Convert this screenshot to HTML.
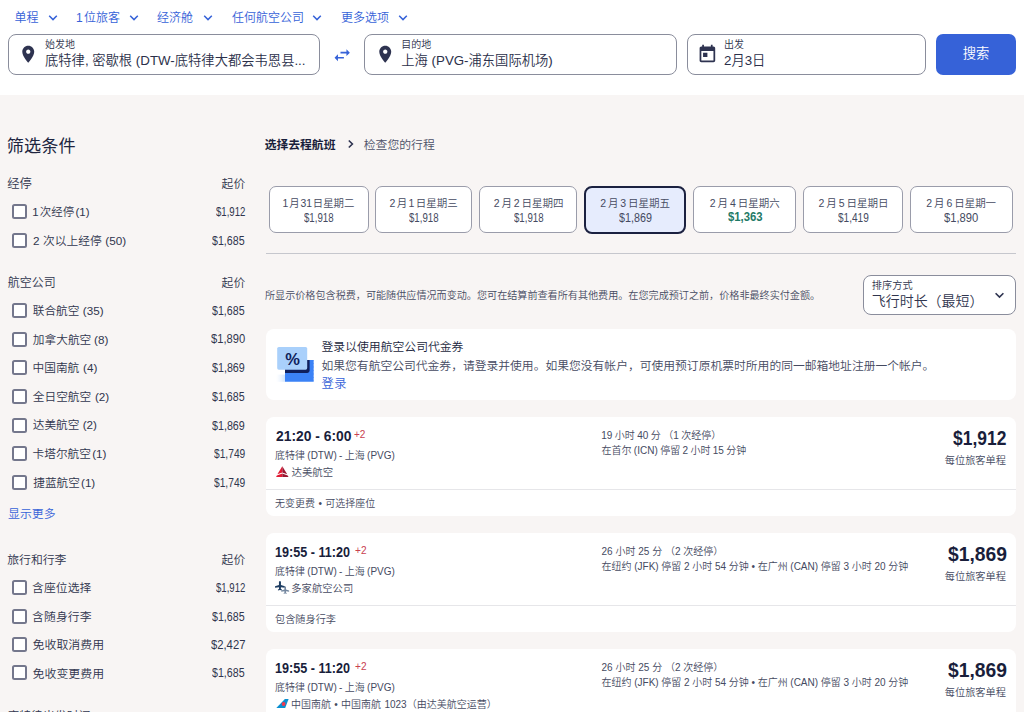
<!DOCTYPE html>
<html lang="zh-CN">
<head>
<meta charset="utf-8">
<title>航班搜索结果</title>
<style>
*{box-sizing:border-box;margin:0;padding:0}
html,body{width:1024px;height:712px;overflow:hidden}
body{position:relative;background:#f8f5f4;color:#191e3b;font-family:"Liberation Sans","Noto Sans CJK SC",sans-serif;font-size:12px;line-height:1;font-weight:350}
.abs{position:absolute;white-space:nowrap}
.x{position:absolute;white-space:nowrap;line-height:1;font-weight:350}
.hdr{position:absolute;left:0;top:0;width:1024px;height:95px;background:#fff}
.opt{position:absolute;top:10.7px;word-spacing:-2px;font-size:12px;color:#3662d8;white-space:nowrap;height:14px;line-height:14px}
.field{position:absolute;top:34px;height:41px;border:1px solid #8a8d9c;border-radius:8px;background:#fff}
.field .lab{position:absolute;left:36px;top:4.8px;font-size:10px;color:#2b304a;white-space:nowrap}
.field .val{position:absolute;left:36px;top:19.2px;font-size:13.3px;color:#2b304a;white-space:nowrap}
.btn{position:absolute;left:935.9px;top:34.3px;width:80.4px;height:40.3px;border-radius:7px;background:#3662d8;color:#fff;font-size:13.3px;text-align:center;line-height:40px}
.cbx{position:absolute;left:11.9px;width:15px;height:15px;border:2px solid #74778c;border-radius:2.5px;background:#fff}
.tab{position:absolute;top:186px;height:47px;border:1px solid #9a9caa;border-radius:7px;background:#fff}
.tab.sel{top:186px;height:47.5px;border:2px solid #1b2140;background:#e6ecfd;border-radius:8px}
.card{position:absolute;left:265.5px;width:750.7px;background:#fff;border-radius:8px}
.ln{position:absolute;left:265.5px;width:750.7px;height:1px;background:#e6e6e9}
</style>
</head>
<body>
<div class="hdr"></div>

<div class="opt" style="left:14.5px">单程</div><svg class="abs" style="left:48px;top:13.5px" width="10" height="8" viewBox="0 0 10 8"><path d="M1.2 1.8 L5 5.6 L8.8 1.8" fill="none" stroke="#3662d8" stroke-width="1.5"/></svg>
<div class="opt" style="left:76px">1 位旅客</div><svg class="abs" style="left:128.5px;top:13.5px" width="10" height="8" viewBox="0 0 10 8"><path d="M1.2 1.8 L5 5.6 L8.8 1.8" fill="none" stroke="#3662d8" stroke-width="1.5"/></svg>
<div class="opt" style="left:157px">经济舱</div><svg class="abs" style="left:202.5px;top:13.5px" width="10" height="8" viewBox="0 0 10 8"><path d="M1.2 1.8 L5 5.6 L8.8 1.8" fill="none" stroke="#3662d8" stroke-width="1.5"/></svg>
<div class="opt" style="left:232px">任何航空公司</div><svg class="abs" style="left:312px;top:13.5px" width="10" height="8" viewBox="0 0 10 8"><path d="M1.2 1.8 L5 5.6 L8.8 1.8" fill="none" stroke="#3662d8" stroke-width="1.5"/></svg>
<div class="opt" style="left:341px">更多选项</div><svg class="abs" style="left:397.5px;top:13.5px" width="10" height="8" viewBox="0 0 10 8"><path d="M1.2 1.8 L5 5.6 L8.8 1.8" fill="none" stroke="#3662d8" stroke-width="1.5"/></svg>
<div class="field" style="left:8px;width:312px"><div class="lab">始发地</div><div class="val">底特律, 密歇根 (DTW-底特律大都会韦恩县...</div></div>
<svg class="abs" style="left:17.7px;top:44.3px" width="20.5" height="20.5" viewBox="0 0 24 24"><path fill="#2e3350" d="M12 2C8.13 2 5 5.13 5 9c0 5.25 7 13 7 13s7-7.75 7-13c0-3.87-3.13-7-7-7zm0 9.5c-1.38 0-2.5-1.12-2.5-2.5s1.12-2.5 2.5-2.5 2.5 1.12 2.5 2.5-1.12 2.5-2.5 2.5z"/></svg>
<svg class="abs" style="left:331.9px;top:44.5px" width="20.4" height="20.4" viewBox="0 0 24 24"><path fill="#3662d8" d="M6.99 11L3 15l3.99 4v-3H14v-2H6.99v-3zM21 9l-3.99-4v3H10v2h7.01v3L21 9z"/></svg>
<div class="field" style="left:364.3px;width:312.7px"><div class="lab">目的地</div><div class="val">上海 (PVG-浦东国际机场)</div></div>
<svg class="abs" style="left:374.6px;top:44.3px" width="20.5" height="20.5" viewBox="0 0 24 24"><path fill="#2e3350" d="M12 2C8.13 2 5 5.13 5 9c0 5.25 7 13 7 13s7-7.75 7-13c0-3.87-3.13-7-7-7zm0 9.5c-1.38 0-2.5-1.12-2.5-2.5s1.12-2.5 2.5-2.5 2.5 1.12 2.5 2.5-1.12 2.5-2.5 2.5z"/></svg>
<div class="field" style="left:687px;width:239.3px"><div class="lab">出发</div><div class="val">2月3日</div></div>
<svg class="abs" style="left:697.1px;top:44.2px" width="20.8" height="20.8" viewBox="0 0 24 24"><path fill="#2e3350" d="M19 3h-1V1h-2v2H8V1H6v2H5c-1.11 0-1.99.9-1.99 2L3 19c0 1.1.89 2 2 2h14c1.1 0 2-.9 2-2V5c0-1.1-.9-2-2-2zm0 16H5V8h14v11zM7 10h5v5H7z"/></svg>
<div class="btn">搜索</div>

<div class="cbx" style="top:204.1px"></div>
<div class="cbx" style="top:232.6px"></div>
<div class="cbx" style="top:303.0px"></div>
<div class="cbx" style="top:331.7px"></div>
<div class="cbx" style="top:360.3px"></div>
<div class="cbx" style="top:388.8px"></div>
<div class="cbx" style="top:417.5px"></div>
<div class="cbx" style="top:446.0px"></div>
<div class="cbx" style="top:474.6px"></div>
<div class="cbx" style="top:580.2px"></div>
<div class="cbx" style="top:608.6px"></div>
<div class="cbx" style="top:637.1px"></div>
<div class="cbx" style="top:665.4px"></div>
<svg class="abs" style="left:346.5px;top:138.5px" width="8" height="10" viewBox="0 0 8 10"><path d="M1.8 1.5 L5.4 5 L1.8 8.5" fill="none" stroke="#2e3350" stroke-width="1.6"/></svg>
<div class="tab" style="left:269.0px;width:100.00px"></div>
<div class="tab" style="left:375.25px;width:96.75px"></div>
<div class="tab" style="left:479.0px;width:98.00px"></div>
<div class="tab sel" style="left:583.75px;width:102.50px"></div>
<div class="tab" style="left:692.8px;width:103.40px"></div>
<div class="tab" style="left:802.9px;width:99.80px"></div>
<div class="tab" style="left:909.8px;width:103.10px"></div>
<div class="abs" style="left:265.5px;top:253px;width:750.7px;height:1px;background:#c6c7cd"></div>
<div class="abs" style="left:863px;top:274.5px;width:153.3px;height:40px;border:1px solid #8a8d9c;border-radius:8px;background:#fff"></div>
<svg class="abs" style="left:993.5px;top:290.5px" width="11" height="9" viewBox="0 0 11 9"><path d="M1.6 2.2 L5.5 6.1 L9.4 2.2" fill="none" stroke="#2e3350" stroke-width="1.6"/></svg>
<div class="card" style="top:328.7px;height:71.3px"></div>
<svg class="abs" style="left:274px;top:344px" width="44" height="42" viewBox="274 344 44 42">
<defs><linearGradient id="fade" x1="0" y1="0" x2="1" y2="0"><stop offset="0" stop-color="#d7e8fd" stop-opacity="0"/><stop offset="1" stop-color="#a9cdf9" stop-opacity="0.55"/></linearGradient></defs>
<rect x="276" y="374.6" width="9.2" height="7.2" fill="url(#fade)"/>
<path d="M285 360.1 H313.4 L314 360.7 L313.4 361.4 L314 362.1 L313.4 362.8 L314 363.5 L313.4 364.2 L314 364.9 L313.4 365.6 L314 366.3 L313.4 367 L314 367.7 L313.4 368.4 L314 369.1 L313.4 369.8 L314 370.5 L313.4 371.2 L314 371.9 L313.4 372.6 L314 373.3 L313.4 374 L314 374.7 L313.4 375.4 L314 376.1 L313.4 376.8 L314 377.5 L313.4 378.2 L314 378.9 L313.4 379.6 L314 380.3 L313.4 381 L314 381.8 H285 Z" fill="#3b82f6"/>
<path d="M285 360.1 H309.6 V370.6 Q309.6 372.9 307.3 372.9 H285 Z" fill="#0f1f5c"/>
<rect x="277.2" y="347" width="30" height="22.7" rx="1.6" fill="#a9d0fb"/>
<text x="292.7" y="364.6" text-anchor="middle" font-family="Liberation Sans, sans-serif" font-weight="bold" font-size="16.5" fill="#0f1f5c">%</text>
</svg>
<div class="card" style="top:417.3px;height:98.7px"></div>
<div class="ln" style="top:489px"></div>
<div class="card" style="top:533.3px;height:98.7px"></div>
<div class="ln" style="top:605px"></div>
<div class="card" style="top:649.3px;height:98.7px"></div>
<div class="ln" style="top:721px"></div>
<svg class="abs" style="left:275px;top:465px" width="15" height="13" viewBox="275 465 15 13">
<path d="M282.3 466.2 L277.4 474.3 L282.3 472.5 Z" fill="#e01933"/><path d="M282.3 466.2 L287.2 474.3 L282.3 472.5 Z" fill="#9b1631"/>
<path d="M276.1 476.9 L276.9 475.5 L282.3 473.6 L282.3 476.9 Z" fill="#e01933"/><path d="M288.5 476.9 L287.7 475.5 L282.3 473.6 L282.3 476.9 Z" fill="#9b1631"/>
</svg>
<svg class="abs" style="left:274px;top:580px" width="17" height="16" viewBox="274 580 17 16">
<path transform="translate(279.95,581.0) scale(1.0)" fill="#1f3e63" d="M-1 0.7 Q0 -0.5 1 0.7 L1 4 L4.9 5.3 L4.9 6.7 L1 6.2 L0.9 7.9 L2 8.6 L2 9.4 L0 9 L-2 9.4 L-2 8.6 L-0.9 7.9 L-1 6.2 L-4.9 6.7 L-4.9 5.3 L-1 4 Z"/>
<path transform="translate(285.2,586.3) scale(0.8)" fill="#73869f" d="M-1 0.7 Q0 -0.5 1 0.7 L1 4 L4.9 5.3 L4.9 6.7 L1 6.2 L0.9 7.9 L2 8.6 L2 9.4 L0 9 L-2 9.4 L-2 8.6 L-0.9 7.9 L-1 6.2 L-4.9 6.7 L-4.9 5.3 L-1 4 Z"/>
</svg>
<svg class="abs" style="left:275px;top:697px" width="15" height="13" viewBox="275 697 15 13">
<path d="M284.9 698.9 H288.6 L285.2 708.1 H276.3 Z" fill="#0a8fd0"/>
<circle cx="283.6" cy="704" r="1.9" fill="#f0384e"/>
</svg>
<div class="x" id="h2" style="left:6.75px;top:138.22px;font-size:17.13px;color:#20253f;font-weight:400;letter-spacing:0.101px">筛选条件</div>
<div class="x" id="at" style="left:7.25px;top:178.19px;font-size:12.29px;color:#30354e">经停</div>
<div class="x" id="ap" style="left:221.55px;top:178.26px;font-size:11.74px;color:#30354e;letter-spacing:0.150px">起价</div>
<div class="x" id="al0" style="left:32.25px;top:206.75px;font-size:11.45px;color:#30354e;letter-spacing:0.030px;word-spacing:-2.00px">1 次经停 (1)</div>
<div class="x" id="av0" style="left:215.55px;top:206.15px;font-size:12.30px;color:#30354e;transform:scaleX(0.782);transform-origin:0 50%">$1,912</div>
<div class="x" id="al1" style="left:33.00px;top:234.55px;font-size:11.72px;color:#30354e;letter-spacing:0.013px;word-spacing:0.30px">2 次以上经停 (50)</div>
<div class="x" id="av1" style="left:212.15px;top:234.65px;font-size:12.30px;color:#30354e;transform:scaleX(0.866);transform-origin:0 50%">$1,685</div>
<div class="x" id="bt" style="left:7.70px;top:277.09px;font-size:11.99px;color:#30354e;letter-spacing:0.049px">航空公司</div>
<div class="x" id="bp" style="left:221.55px;top:277.16px;font-size:11.74px;color:#30354e;letter-spacing:0.150px">起价</div>
<div class="x" id="bl0" style="left:32.75px;top:304.95px;font-size:11.67px;color:#30354e;letter-spacing:0.019px;word-spacing:0.10px">联合航空 (35)</div>
<div class="x" id="bv0" style="left:212.15px;top:305.05px;font-size:12.30px;color:#30354e;transform:scaleX(0.866);transform-origin:0 50%">$1,685</div>
<div class="x" id="bl1" style="left:32.75px;top:333.65px;font-size:11.70px;color:#30354e;letter-spacing:0.031px;word-spacing:-0.50px">加拿大航空 (8)</div>
<div class="x" id="bv1" style="left:211.00px;top:333.05px;font-size:12.30px;color:#30354e;transform:scaleX(0.908);transform-origin:0 50%">$1,890</div>
<div class="x" id="bl2" style="left:32.50px;top:362.25px;font-size:11.71px;color:#30354e;letter-spacing:-0.007px;word-spacing:0.55px">中国南航 (4)</div>
<div class="x" id="bv2" style="left:212.40px;top:362.35px;font-size:12.30px;color:#30354e;transform:scaleX(0.872);transform-origin:0 50%">$1,869</div>
<div class="x" id="bl3" style="left:32.75px;top:390.75px;font-size:11.69px;color:#30354e;letter-spacing:0.012px;word-spacing:0.40px">全日空航空 (2)</div>
<div class="x" id="bv3" style="left:212.15px;top:390.85px;font-size:12.30px;color:#30354e;transform:scaleX(0.866);transform-origin:0 50%">$1,685</div>
<div class="x" id="bl4" style="left:32.75px;top:419.45px;font-size:11.66px;color:#30354e;letter-spacing:-0.007px;word-spacing:0.05px">达美航空 (2)</div>
<div class="x" id="bv4" style="left:212.40px;top:419.55px;font-size:12.30px;color:#30354e;transform:scaleX(0.872);transform-origin:0 50%">$1,869</div>
<div class="x" id="bl5" style="left:32.50px;top:447.95px;font-size:11.71px;color:#30354e;letter-spacing:-0.012px;word-spacing:-2.00px">卡塔尔航空 (1)</div>
<div class="x" id="bv5" style="left:213.60px;top:448.05px;font-size:12.30px;color:#30354e;transform:scaleX(0.831);transform-origin:0 50%">$1,749</div>
<div class="x" id="bl6" style="left:33.25px;top:476.55px;font-size:11.64px;color:#30354e;letter-spacing:0.007px;word-spacing:-2.00px">捷蓝航空 (1)</div>
<div class="x" id="bv6" style="left:213.60px;top:476.65px;font-size:12.30px;color:#30354e;transform:scaleX(0.831);transform-origin:0 50%">$1,749</div>
<div class="x" id="more" style="left:8.00px;top:508.73px;font-size:11.90px;color:#3662d8">显示更多</div>
<div class="x" id="ct" style="left:7.25px;top:555.19px;font-size:11.89px;color:#30354e;letter-spacing:-0.054px">旅行和行李</div>
<div class="x" id="cp" style="left:221.55px;top:554.46px;font-size:11.74px;color:#30354e;letter-spacing:0.150px">起价</div>
<div class="x" id="cl0" style="left:32.08px;top:583.45px;font-size:11.83px;color:#30354e;letter-spacing:0.027px">含座位选择</div>
<div class="x" id="cv0" style="left:215.55px;top:582.25px;font-size:12.30px;color:#30354e;transform:scaleX(0.782);transform-origin:0 50%">$1,912</div>
<div class="x" id="cl1" style="left:32.08px;top:611.95px;font-size:11.83px;color:#30354e;letter-spacing:0.090px">含随身行李</div>
<div class="x" id="cv1" style="left:212.15px;top:610.65px;font-size:12.30px;color:#30354e;transform:scaleX(0.866);transform-origin:0 50%">$1,685</div>
<div class="x" id="cl2" style="left:32.50px;top:640.25px;font-size:11.93px;color:#30354e;letter-spacing:0.030px">免收取消费用</div>
<div class="x" id="cv2" style="left:211.00px;top:639.15px;font-size:12.30px;color:#30354e;transform:scaleX(0.914);transform-origin:0 50%">$2,427</div>
<div class="x" id="cl3" style="left:32.50px;top:668.85px;font-size:11.93px;color:#30354e;letter-spacing:0.030px">免收变更费用</div>
<div class="x" id="cv3" style="left:212.15px;top:667.45px;font-size:12.30px;color:#30354e;transform:scaleX(0.866);transform-origin:0 50%">$1,685</div>
<div class="x" id="dt" style="left:7.25px;top:710.80px;font-size:11.89px;color:#30354e;letter-spacing:0.030px">底特律出发时间</div>
<div class="x" id="bc1" style="left:264.75px;top:139.92px;font-size:11.83px;color:#191e3b;font-weight:bold;letter-spacing:-0.050px">选择去程航班</div>
<div class="x" id="bc2" style="left:363.75px;top:139.92px;font-size:11.83px;color:#4b5067">检查您的行程</div>
<div class="x" id="td0" style="left:282.50px;top:199.15px;font-size:10.39px;color:#454a61;word-spacing:-2.00px">1 月 31 日星期二</div>
<div class="x" id="tp0" style="left:303.75px;top:212.25px;font-size:12.50px;color:#454a61;transform:scaleX(0.773);transform-origin:0 50%">$1,918</div>
<div class="x" id="td1" style="left:389.50px;top:198.05px;font-size:10.50px;color:#454a61;word-spacing:-1.58px">2 月 1 日星期三</div>
<div class="x" id="tp1" style="left:408.75px;top:212.25px;font-size:12.50px;color:#454a61;transform:scaleX(0.773);transform-origin:0 50%">$1,918</div>
<div class="x" id="td2" style="left:493.75px;top:198.05px;font-size:10.50px;color:#454a61;word-spacing:-1.08px">2 月 2 日星期四</div>
<div class="x" id="tp2" style="left:513.75px;top:212.25px;font-size:12.50px;color:#454a61;transform:scaleX(0.773);transform-origin:0 50%">$1,918</div>
<div class="x" id="td3" style="left:600.25px;top:198.05px;font-size:10.50px;color:#454a61;word-spacing:-1.08px">2 月 3 日星期五</div>
<div class="x" id="tp3" style="left:619.00px;top:212.25px;font-size:12.50px;color:#454a61;transform:scaleX(0.860);transform-origin:0 50%">$1,869</div>
<div class="x" id="td4" style="left:709.65px;top:199.15px;font-size:10.49px;color:#454a61;letter-spacing:0.006px;word-spacing:-0.93px">2 月 4 日星期六</div>
<div class="x" id="tp4" style="left:727.66px;top:211.25px;font-size:12.50px;color:#1f7a66;transform:scaleX(0.905);transform-origin:0 50%;font-weight:bold">$1,363</div>
<div class="x" id="td5" style="left:818.45px;top:198.05px;font-size:10.53px;color:#454a61;letter-spacing:-0.010px;word-spacing:-0.95px">2 月 5 日星期日</div>
<div class="x" id="tp5" style="left:837.94px;top:212.25px;font-size:12.50px;color:#454a61;transform:scaleX(0.805);transform-origin:0 50%">$1,419</div>
<div class="x" id="td6" style="left:926.30px;top:199.15px;font-size:10.48px;color:#454a61;letter-spacing:0.012px;word-spacing:-1.01px">2 月 6 日星期一</div>
<div class="x" id="tp6" style="left:944.40px;top:212.25px;font-size:12.50px;color:#454a61;transform:scaleX(0.897);transform-origin:0 50%">$1,890</div>
<div class="x" id="disc" style="left:265.00px;top:290.75px;font-size:10.10px;color:#454a61">所显示价格包含税费，可能随供应情况而变动。您可在结算前查看所有其他费用。在您完成预订之前，价格非最终实付金额。</div>
<div class="x" id="sl" style="left:871.75px;top:280.88px;font-size:10.19px;color:#30354e;letter-spacing:0.083px">排序方式</div>
<div class="x" id="sv" style="left:871.75px;top:295.15px;font-size:13.97px;color:#30354e">飞行时长（最短）</div>
<div class="x" id="cpt" style="left:321.50px;top:341.85px;font-size:11.83px;color:#191e3b">登录以使用航空公司代金券</div>
<div class="x" id="cpb" style="left:321.50px;top:359.89px;font-size:11.79px;color:#454a61;letter-spacing:0.005px">如果您有航空公司代金券，请登录并使用。如果您没有帐户，可使用预订原机票时所用的同一邮箱地址注册一个帐户。</div>
<div class="x" id="cpl" style="left:321.50px;top:378.32px;font-size:12.29px;color:#3662d8;letter-spacing:0.500px">登录</div>
<div class="x" id="f0t" style="left:275.50px;top:429.02px;font-size:14.20px;color:#191e3b;transform:scaleX(0.976);transform-origin:0 50%;font-weight:bold">21:20 - 6:00</div>
<div class="x" id="f0n" style="left:354.25px;top:428.91px;font-size:11.00px;color:#c8414f;transform:scaleX(0.912);transform-origin:0 50%">+2</div>
<div class="x" id="f0r" style="left:275.00px;top:451.25px;font-size:9.99px;color:#454a61;letter-spacing:0.008px;word-spacing:-0.45px">底特律 (DTW) - 上海 (PVG)</div>
<div class="x" id="f0a" style="left:291.50px;top:467.88px;font-size:10.45px;color:#454a61">达美航空</div>
<div class="x" id="f0d" style="left:601.25px;top:430.75px;font-size:10.00px;color:#454a61;word-spacing:-0.35px">19 小时 40 分 （1 次经停）</div>
<div class="x" id="f0s" style="left:601.50px;top:446.15px;font-size:10.00px;color:#454a61;letter-spacing:0.011px;word-spacing:-0.46px">在首尔 (ICN) 停留 2 小时 15 分钟</div>
<div class="x" id="f0p" style="left:953.00px;top:428.95px;font-size:19.50px;color:#191e3b;transform:scaleX(0.894);transform-origin:0 50%;font-weight:bold">$1,912</div>
<div class="x" id="f0q" style="left:944.75px;top:456.31px;font-size:10.21px;color:#454a61">每位旅客单程</div>
<div class="x" id="f0f" style="left:275.00px;top:499.32px;font-size:10.00px;color:#454a61;letter-spacing:0.005px;word-spacing:0.59px">无变更费 • 可选择座位</div>
<div class="x" id="f1t" style="left:274.60px;top:545.02px;font-size:14.20px;color:#191e3b;transform:scaleX(0.888);transform-origin:0 50%;font-weight:bold">19:55 - 11:20</div>
<div class="x" id="f1n" style="left:354.50px;top:544.91px;font-size:11.00px;color:#c8414f;transform:scaleX(0.916);transform-origin:0 50%">+2</div>
<div class="x" id="f1r" style="left:275.00px;top:567.25px;font-size:9.99px;color:#454a61;letter-spacing:0.008px;word-spacing:-0.45px">底特律 (DTW) - 上海 (PVG)</div>
<div class="x" id="f1a" style="left:291.25px;top:583.88px;font-size:10.29px;color:#454a61;letter-spacing:0.060px">多家航空公司</div>
<div class="x" id="f1d" style="left:601.50px;top:546.75px;font-size:10.00px;color:#454a61;letter-spacing:0.012px;word-spacing:-0.02px">26 小时 25 分 （2 次经停）</div>
<div class="x" id="f1s" style="left:601.50px;top:562.15px;font-size:10.00px;color:#454a61;word-spacing:-0.09px">在纽约 (JFK) 停留 2 小时 54 分钟 • 在广州 (CAN) 停留 3 小时 20 分钟</div>
<div class="x" id="f1p" style="left:947.50px;top:544.95px;font-size:19.50px;color:#191e3b;transform:scaleX(0.989);transform-origin:0 50%;font-weight:bold">$1,869</div>
<div class="x" id="f1q" style="left:944.75px;top:572.31px;font-size:10.21px;color:#454a61">每位旅客单程</div>
<div class="x" id="f1f" style="left:275.00px;top:615.32px;font-size:10.13px;color:#454a61;letter-spacing:0.050px">包含随身行李</div>
<div class="x" id="f2t" style="left:274.60px;top:661.02px;font-size:14.20px;color:#191e3b;transform:scaleX(0.888);transform-origin:0 50%;font-weight:bold">19:55 - 11:20</div>
<div class="x" id="f2n" style="left:354.50px;top:660.91px;font-size:11.00px;color:#c8414f;transform:scaleX(0.916);transform-origin:0 50%">+2</div>
<div class="x" id="f2r" style="left:275.00px;top:683.25px;font-size:9.99px;color:#454a61;letter-spacing:0.008px;word-spacing:-0.45px">底特律 (DTW) - 上海 (PVG)</div>
<div class="x" id="f2a" style="left:291.00px;top:699.88px;font-size:10.00px;color:#454a61;word-spacing:0.53px">中国南航 • 中国南航 1023（由达美航空运营）</div>
<div class="x" id="f2d" style="left:601.50px;top:662.75px;font-size:10.00px;color:#454a61;letter-spacing:0.012px;word-spacing:-0.02px">26 小时 25 分 （2 次经停）</div>
<div class="x" id="f2s" style="left:601.50px;top:678.15px;font-size:10.00px;color:#454a61;word-spacing:-0.09px">在纽约 (JFK) 停留 2 小时 54 分钟 • 在广州 (CAN) 停留 3 小时 20 分钟</div>
<div class="x" id="f2p" style="left:947.50px;top:660.95px;font-size:19.50px;color:#191e3b;transform:scaleX(0.989);transform-origin:0 50%;font-weight:bold">$1,869</div>
<div class="x" id="f2q" style="left:944.75px;top:688.31px;font-size:10.21px;color:#454a61">每位旅客单程</div>
</body>
</html>
